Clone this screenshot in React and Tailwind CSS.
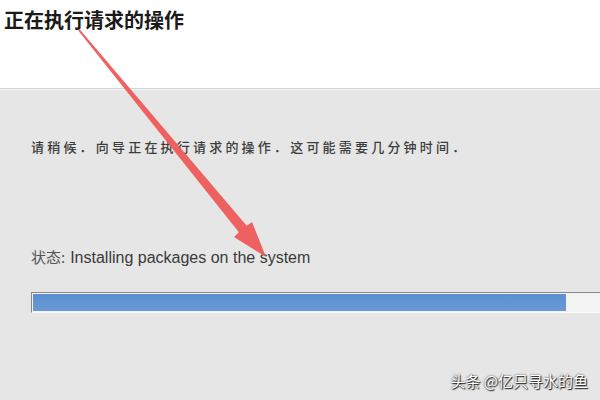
import React from 'react';

const Arrow = () => (
    <svg className="absolute inset-0 pointer-events-none" width="600" height="400" viewBox="0 0 600 400">
        <polygon
            points="79.8,29.4 246.7,225.8 252,222 266,257 234,237 238.9,232.2 78.2,30.6"
            fill="#ee5a5a"
            opacity="0.95"
        />
    </svg>
);

export default function App() {
    return (
        <div className="relative w-[600px] h-[400px] overflow-hidden bg-[#e6e6e6]" style={{ fontFamily: '"Noto Sans CJK SC", "Liberation Sans", sans-serif' }}>
            <div className="h-[89px] bg-white border-b border-[#d4d4d4] px-[4px] pt-[6px]">
                <h1 className="text-[20px] font-bold text-[#1a1a1a] leading-[28px]">正在执行请求的操作</h1>
            </div>
            <div className="border-t border-[#f2f2f2] pl-[31px] pt-[45px]">
                <p className="text-[13px] font-medium text-[#3c3c3c] tracking-[3.2px] leading-[24px]">
                    请稍候．向导正在执行请求的操作．这可能需要几分钟时间．
                </p>
                <p className="mt-[86px] text-[15px] text-[#555] leading-[24px] flex items-baseline">
                    <span>状态:</span>
                    <span className="ml-[5px] text-[16px] text-[#3a3a3a]" style={{ fontFamily: '"Liberation Sans", sans-serif' }}>Installing packages on the system</span>
                </p>
                <div className="mt-[22px] h-[21px] border border-[#8a8a8a] border-b-[#fafafa] border-r-0 bg-[#f3f3f3] p-[1px] flex">
                    <div className="w-[533px] h-full bg-gradient-to-b from-[#5b8fd0] to-[#6a9ad6]" />
                </div>
            </div>
            <div className="absolute right-[12px] bottom-[8px] text-[15px] text-white" style={{ textShadow: '0 0 2px #222, 1px 1px 1px #222' }}>
                头条 @亿只寻水的鱼
            </div>
            <Arrow />
        </div>
    );
}
